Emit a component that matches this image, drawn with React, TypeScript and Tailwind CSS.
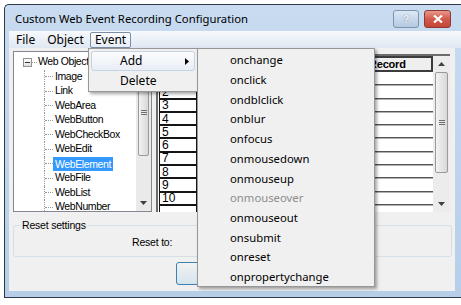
import React from 'react';

const treeItems = ['Image', 'Link', 'WebArea', 'WebButton', 'WebCheckBox', 'WebEdit', 'WebElement', 'WebFile', 'WebList', 'WebNumber'];

const events = [
  'onchange',
  'onclick',
  'ondblclick',
  'onblur',
  'onfocus',
  'onmousedown',
  'onmouseup',
  'onmouseover',
  'onmouseout',
  'onsubmit',
  'onreset',
  'onpropertychange',
];

const rows = [1, 2, 3, 4, 5, 6, 7, 8, 9, 10, 11];

const ui = { fontFamily: '"Noto Sans", "Open Sans", sans-serif' };
const classic = { fontFamily: '"Liberation Sans", Arial, sans-serif' };

function ScrollArrow({ up }: { up?: boolean }) {
  return (
    <div className="h-[16px] flex items-center justify-center">
      <svg width="7" height="4" viewBox="0 0 7 4">
        <path d={up ? 'M0 4 L3.5 0 L7 4 Z' : 'M0 0 L3.5 4 L7 0 Z'} fill="#404040" />
      </svg>
    </div>
  );
}

function Thumb({ height }: { height: number }) {
  return (
    <div
      className="mx-[2px] rounded-[2px] border border-[#9a9a9a] bg-gradient-to-r from-[#f3f3f3] to-[#d8d8d8] flex items-center justify-center"
      style={{ height }}
    >
      <div className="flex flex-col gap-[1px]">
        <div className="w-[6px] h-[1px] bg-[#707070]" />
        <div className="w-[6px] h-[1px] bg-[#707070]" />
        <div className="w-[6px] h-[1px] bg-[#707070]" />
      </div>
    </div>
  );
}

export default function App() {
  return (
    <div className="relative w-[461px] h-[305px] overflow-hidden bg-white pt-[4px] pl-[4px]">
      {/* window */}
      <div className="w-[457px] h-[294px] border border-r-0 border-[#2f3a48] rounded-tl-[5px] bg-gradient-to-b from-[#c8dbf0] to-[#b6cee8] flex flex-col">
        {/* title bar */}
        <div className="h-[26px] flex items-start pl-[10px] pr-[10px]">
          <span className="mt-[6px] text-[11.3px] leading-[16px] text-black" style={ui}>
            Custom Web Event Recording Configuration
          </span>
          <div className="ml-auto mt-[5px] flex gap-[5px]">
            <div className="w-[26px] h-[18px] rounded-[3px] border border-[#7f93ab] bg-gradient-to-b from-[#dce8f5] to-[#b4c9e2] flex items-center justify-center">
              <span className="text-[11px] leading-none font-bold text-[#f4f7fb] [text-shadow:0_0_1px_#55667a]" style={classic}>?</span>
            </div>
            <div className="w-[27px] h-[18px] rounded-[3px] border border-[#8c3a33] bg-gradient-to-b from-[#e8988c] via-[#d25a4b] to-[#c44536] flex items-center justify-center">
              <svg width="10" height="8" viewBox="0 0 10 8">
                <path d="M1 0.5 L9 7.5 M9 0.5 L1 7.5" stroke="#ffffff" strokeWidth="2.2" />
              </svg>
            </div>
          </div>
        </div>

        {/* menu bar */}
        <div className="ml-[4px] h-[17px] bg-gradient-to-b from-[#f7f9fc] to-[#dfe8f3] flex items-center text-[12px] text-black" style={ui}>
          <span className="ml-[7px]">File</span>
          <span className="ml-[12px]">Object</span>
          <span className="ml-[6px] h-[16px] px-[4px] border border-[#7b8ea6] rounded-[2px] bg-gradient-to-b from-[#fbfcfe] to-[#e6edf6] leading-[14px]">Event</span>
        </div>

        {/* client area */}
        <div className="ml-[4px] mr-[6px] mb-[6px] flex-1 bg-[#f0f0f0] flex flex-col">
          <div className="flex pt-[3px] pl-[4px]">
            {/* tree */}
            <div className="w-[139px] h-[161px] border border-[#828790] bg-white flex overflow-hidden">
              <div className="flex-1 pt-[3px] text-[10.5px] tracking-[-0.4px] text-black" style={classic}>
                <div className="h-[14.5px] flex items-center">
                  <div className="ml-[9px] w-[9px] h-[9px] border border-[#919191] bg-gradient-to-b from-white to-[#e0e0e0] flex items-center justify-center">
                    <div className="w-[5px] h-[1px] bg-[#333]" />
                  </div>
                  <div className="w-[5px] border-t border-dotted border-[#999]" />
                  <span className="ml-[1px]">Web Object</span>
                </div>
                {treeItems.map((item) => (
                  <div key={item} className="h-[14.5px] flex items-center">
                    <div className="ml-[30px] w-[9px] h-full border-l border-dotted border-[#999] flex items-center">
                      <div className="w-full border-t border-dotted border-[#999]" />
                    </div>
                    {item === 'WebElement' ? (
                      <span className="px-[2px] h-[14px] leading-[14px] bg-[#3399ff] text-white">{item}</span>
                    ) : (
                      <span className="ml-[2px]">{item}</span>
                    )}
                  </div>
                ))}
              </div>
              <div className="w-[15px] bg-[#eaeaea] flex flex-col">
                <ScrollArrow up />
                <Thumb height={88} />
                <div className="flex-1" />
                <ScrollArrow />
              </div>
            </div>

            {/* table */}
            <div className="ml-[4px] mt-[3px] w-[294px] h-[158px] border-l-2 border-t-2 border-[#6b6b6b] bg-white flex overflow-hidden">
              <div className="flex-1 flex flex-col">
                <div className="h-[16px] flex shrink-0">
                  <div className="w-[201px] h-full bg-[#f0f0f0] border-b border-r border-[#a0a0a0]" />
                  <div className="flex-1 h-full bg-[#efefef] border-2 border-[#3c3c3c] flex items-center pl-[8px]">
                    <span className="text-[11px] font-bold tracking-[-0.2px]" style={classic}>Record</span>
                  </div>
                </div>
                {rows.map((n) => (
                  <div key={n} className="h-[13.3px] flex shrink-0">
                    <div className="ml-[1px] w-[38px] h-full border border-[#151515] flex items-center pl-[2px] text-[12px] leading-none" style={classic}>
                      {n < 11 ? n : ''}
                    </div>
                    <div className="flex-1 h-full border-b border-[#555] shadow-[0_1px_0_#b0b0b0]" />
                  </div>
                ))}
              </div>
              <div className="w-[17px] bg-[#ececec] flex flex-col">
                <ScrollArrow up />
                <Thumb height={101} />
                <div className="flex-1" />
                <ScrollArrow />
              </div>
            </div>
          </div>

          {/* reset group */}
          <fieldset className="ml-[4px] mt-[7px] w-[439px] h-[38px] border border-[#d5dfe5] rounded-[3px] px-[6px] text-[10.5px] tracking-[-0.2px] text-black" style={classic}>
            <legend className="px-[1px] ml-[1px] leading-[12px]">Reset settings</legend>
            <div className="pl-[112px] pt-[4px]">Reset to:</div>
          </fieldset>

          <div className="ml-[167px] mt-[5px] w-[75px] h-[23px] rounded-[3px] border border-[#3c7fb1] bg-gradient-to-b from-[#f2f2f2] to-[#d6e4ee] flex items-center justify-center text-[12px]" style={ui}>
            Close
          </div>
        </div>
      </div>

      {/* Event dropdown */}
      <div className="absolute left-[88px] top-[48px] w-[110px] h-[44px] bg-[#f0f0f0] border border-[#979797] shadow-[2px_2px_3px_rgba(0,0,0,0.35)] p-[2px] text-[12px] text-black" style={ui}>
        <div className="h-[20px] rounded-[3px] border border-[#c5d3e3] bg-gradient-to-b from-[#fbfcfd] to-[#e9eef5] flex items-center pl-[28px] pr-[5px]">
          <span>Add</span>
          <svg className="ml-auto" width="4" height="7" viewBox="0 0 4 7">
            <path d="M0 0 L4 3.5 L0 7 Z" fill="#000" />
          </svg>
        </div>
        <div className="h-[20px] flex items-center pl-[29px]">Delete</div>
      </div>

      {/* Add submenu */}
      <div className="absolute left-[197px] top-[48px] w-[178px] h-[239px] bg-[#f0f0f0] border border-[#979797] shadow-[2px_2px_3px_rgba(0,0,0,0.35)] pt-[2px] text-[11.3px] text-black" style={ui}>
        {events.map((e) => (
          <div
            key={e}
            className={`h-[19.7px] flex items-center pl-[32px] ${e === 'onmouseover' ? 'text-[#8d8d8d]' : ''}`}
          >
            {e}
          </div>
        ))}
      </div>
    </div>
  );
}
